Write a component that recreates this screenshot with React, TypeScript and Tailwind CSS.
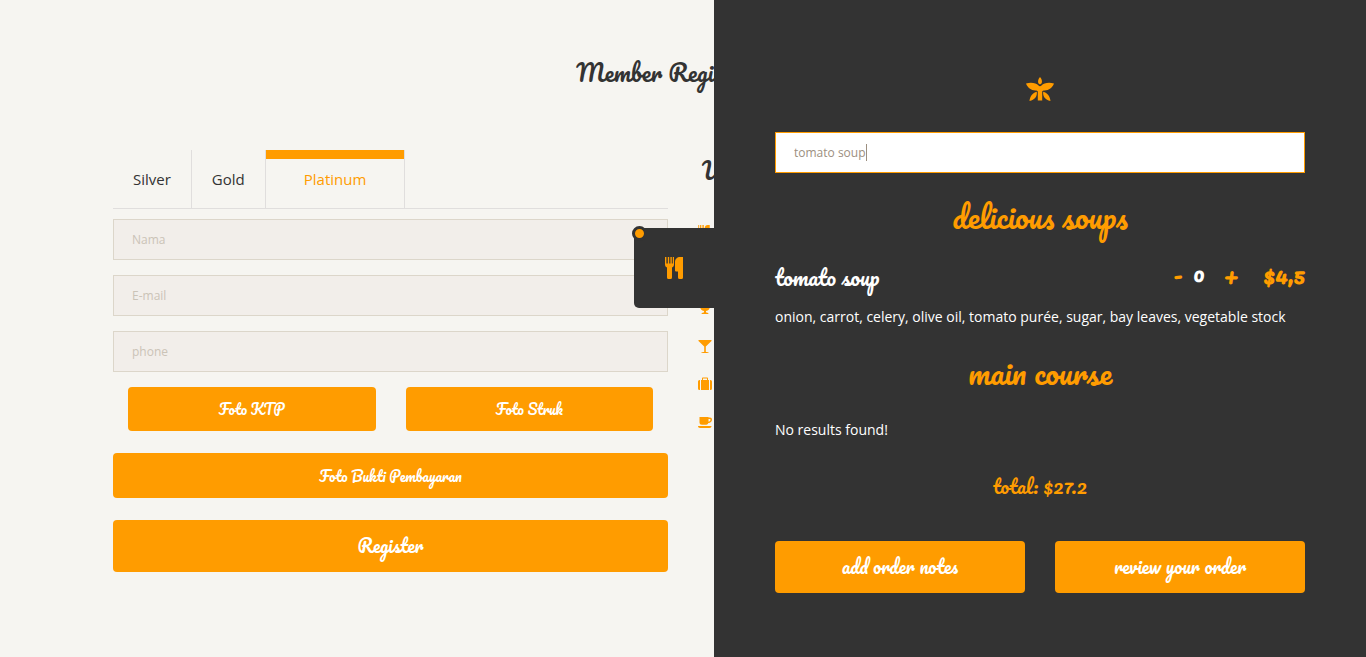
import React from "react";

const script = "font-['Pacifico','Liberation_Serif',cursive]";
const sans = "font-['Open_Sans','Noto_Sans',sans-serif]";

function Cutlery({ className }: { className: string }) {
  return (
    <svg viewBox="0 0 18 22" className={className} fill="currentColor" aria-hidden="true">
      <path d="M0 0h1.4v6.4h1.4V0h1.4v6.4h1.2V0h1.4v6.4h1V0H9v7.500c0 1.600-.8 2.500-2 3V20.500a1.500 1.500 0 0 1-1.500 1.500h-2A1.500 1.500 0 0 1 2 20.500V10.500c-1.200-.5-2-1.400-2-3z" />
      <path d="M18 0v20.500a1.500 1.500 0 0 1-1.500 1.500h-2a1.500 1.500 0 0 1-1.500-1.500V14.500h-2a1 1 0 0 1-1-1V5c0-3 2.300-5 5-5z" />
    </svg>
  );
}

function Leaf() {
  return (
    <svg viewBox="0 0 28 26" className="h-[26px] w-[28px]" fill="currentColor" aria-hidden="true">
      <path d="M14 0c1.800 2 2.300 4 1.700 6.200L14 7.500l-1.700-1.300C11.700 4 12.200 2 14 0z" />
      <path d="M0 6.500C5 5 10.500 6 12.300 8.300c.5.700 1 1 1.700 1s1.200-.3 1.700-1C17.500 6 23 5 28 6.500c-1.500 4.200-5 6.900-9.500 6.900-1.200 0-2 .3-2.300 1V23.500h-4.400V14.400c-.3-.7-1.100-1-2.300-1C5 13.400 1.500 10.700 0 6.500z" />
      <path d="M10.800 14.800c.6 4.500-2 8.200-7.300 9.200.5-4.500 3-8.200 7.300-9.200zM17.200 14.800c-.6 4.500 2 8.200 7.300 9.200-.5-4.500-3-8.200-7.300-9.200z" />
    </svg>
  );
}

const perkIcons = [
  <Cutlery key="cutlery" className="h-3.5 w-3" />,
  <svg key="star" viewBox="0 0 14 14" className="size-3.5" fill="currentColor"><path d="M7 0l2 5h5l-4 3 1.500 5L7 10l-4.500 3L4 8 0 5h5z" /></svg>,
  <svg key="goblet" viewBox="0 0 14 14" className="size-3.5" fill="currentColor"><path d="M2 1h10v4c0 3-1.500 4.500-4 5v1.500c1.500 0 2.500.5 2.500 1.500h-7c0-1 1-1.500 2.500-1.500V10c-2.500-.5-4-2-4-5z" /></svg>,
  <svg key="glass" viewBox="0 0 14 14" className="size-3.5" fill="currentColor"><path d="M.5 1h13v1L7.800 7.500V13c1.500 0 3 .2 3 1H3.200c0-.8 1.500-1 3-1V7.500L.5 2z" /></svg>,
  <svg key="case" viewBox="0 0 14 14" className="size-3.5" fill="currentColor"><path d="M4 3V1.500c0-.6.4-1 1-1h4c.6 0 1 .4 1 1V3h1v10H3V3zm1 0h4V1.500H5zM2 3v10H1.500A1.500 1.500 0 0 1 0 11.500v-7A1.500 1.500 0 0 1 1.500 3zM12 3v10h.5a1.500 1.500 0 0 0 1.500-1.500v-7A1.500 1.500 0 0 0 12.500 3z" /></svg>,
  <svg key="cup" viewBox="0 0 14 14" className="size-3.5" fill="currentColor"><path fillRule="evenodd" d="M1.500 2h9v.5H12a2 2 0 0 1 2 2A3.500 3.500 0 0 1 10.300 8c-.3 1-1 1.700-2 1.700H4A2.500 2.500 0 0 1 1.500 7.200zM10.500 4v2.700c1.200-.1 2-.9 2-2 0-.5-.2-.7-.6-.7zM0 11h13.500c0 1-.8 2-2 2H2c-1.200 0-2-1-2-2z" /></svg>,
];

const solid = `rounded-[4px] bg-[#ff9c00] text-center text-white ${script}`;
const dishHeading = `text-center text-[30px] leading-[38px] text-[#ff9c00] ${script}`;

function Field({ label, type }: { label: string; type: string }) {
  return (
    <input
      type={type}
      aria-label={label}
      placeholder={label}
      className="block h-[41px] w-full border border-[#dcd6ca] bg-[#f2eeea] px-[18px] text-xs text-[#333] outline-none placeholder:text-[#cbc3b7]"
    />
  );
}

function Registration() {
  return (
    <main className="mx-auto max-w-[1140px] pt-[52px]">
      <h1 className={`text-center text-[23px] leading-10 ${script}`}>Member Registration</h1>
      <div className="mt-[58px] grid grid-cols-2 gap-[30px]">
        <form>
          <div role="tablist" className="flex h-[59px] border-b border-[#e0dedd] text-[15px]">
            <button type="button" role="tab" aria-selected="false" className="border-r border-[#e0dedd] px-5">Silver</button>
            <button type="button" role="tab" aria-selected="false" className="border-r border-[#e0dedd] px-5">Gold</button>
            <div className="flex border-r border-[#e0dedd]">
              <button type="button" role="tab" aria-selected="true" className="border-t-[9px] border-[#ff9c00] px-[38px] pb-[9px] text-[#ff9c00]">Platinum</button>
            </div>
          </div>
          <div className="mt-2.5 flex flex-col gap-[15px]">
            <Field label="Nama" type="text" />
            <Field label="E-mail" type="email" />
            <Field label="phone" type="tel" />
            <div className="grid grid-cols-2 gap-[30px] px-[15px]">
              <button type="button" className={`h-11 text-sm ${solid}`}>Foto KTP</button>
              <button type="button" className={`h-11 text-sm ${solid}`}>Foto Struk</button>
            </div>
          </div>
          <div className="mt-[22px] flex flex-col gap-[22px]">
            <button type="button" className={`h-[45px] text-sm ${solid}`}>Foto Bukti Pembayaran</button>
            <button type="submit" className={`h-[52px] text-lg ${solid}`}>Register</button>
          </div>
        </form>
        <section>
          <h2 className={`pl-1 text-[23px] leading-10 ${script}`}>U</h2>
          <ul className="mt-[23px] text-[#ff9c00]">
            {perkIcons.map((icon, i) => (
              <li key={i} className="flex h-[38px] items-center">{icon}</li>
            ))}
          </ul>
        </section>
      </div>
    </main>
  );
}

function OrderPanel() {
  return (
    <aside className="fixed inset-y-0 right-0 w-[652px] bg-[#333] text-white">
      <button type="button" aria-label="Menu" className="absolute top-[228px] right-full flex size-20 items-center justify-center rounded-l-[5px] bg-[#333] text-[#ff9c00]">
        <Cutlery className="h-[22px] w-[18px]" />
        <span className="absolute -top-0.5 -left-0.5 size-[15px] rounded-full border-3 border-[#333] bg-[#ff9c00]" />
      </button>
      <div className="flex flex-col px-[61px] pt-[77px]">
        <div className="flex justify-center text-[#ff9c00]"><Leaf /></div>
        <div className="relative mt-[29px]">
          <input
            type="text"
            aria-label="Search dishes"
            defaultValue="tomato soup"
            className="block h-[41px] w-full border border-[#ff9c00] bg-white px-[18px] text-xs text-[#9c8f80] outline-none"
          />
          <span className="absolute top-3 left-[91px] h-[17px] w-px bg-[#9c8f80]" />
        </div>
        <h2 className={`mt-[25px] ${dishHeading}`}>delicious soups</h2>
        <div className={`mt-[22px] flex h-10 items-center justify-between ${script}`}>
          <h3 className="text-[21px]">tomato soup</h3>
          <div className="flex items-center pb-2 text-[22px] font-bold text-[#ff9c00]">
            <button type="button" aria-label="Remove one" className="w-5 text-left">-</button>
            <output className="w-[30px] text-xl text-white">0</output>
            <button type="button" aria-label="Add one" className="w-10 text-left">+</button>
            <span>$4,5</span>
          </div>
        </div>
        <p className="mt-[7px] text-sm leading-6">onion, carrot, celery, olive oil, tomato purée, sugar, bay leaves, vegetable stock</p>
        <h2 className={`mt-[25px] ${dishHeading}`}>main course</h2>
        <p className="mt-[26px] text-sm leading-6">No results found!</p>
        <p className={`mt-7 text-center text-[19px] leading-8 text-[#ff9c00] ${script}`}>total: $27.2</p>
        <div className="mt-[39px] grid grid-cols-2 gap-[30px]">
          <button type="button" className={`h-[52px] text-lg ${solid}`}>add order notes</button>
          <button type="button" className={`h-[52px] text-lg ${solid}`}>review your order</button>
        </div>
      </div>
    </aside>
  );
}

export default function App() {
  return (
    <div className={`min-h-screen bg-[#f6f5f1] text-[#333] ${sans}`}>
      <Registration />
      <OrderPanel />
    </div>
  );
}
